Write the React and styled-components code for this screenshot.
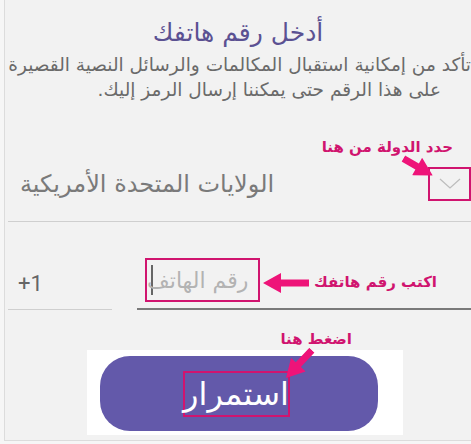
import React from 'react';
import styled, { createGlobalStyle } from 'styled-components';

const pink = '#d0146f';
const arrowPink = '#ee1479';
const arabic = `"DejaVu Sans", "Noto Sans", sans-serif`;

const GlobalStyle = createGlobalStyle`
    body {
        margin: 0;
        background: #f6f6f6;
        font-family: ${arabic};
    }
`;

const Screen = styled.div`
    position: relative;
    box-sizing: border-box;
    width: 467px;
    height: 441px;
    margin-left: 4px;
    background: #f2f2f2;
    border-left: 1px solid #dcdcdc;
    border-bottom: 1px solid #dcdcdc;
    direction: rtl;
`;

const Title = styled.h1`
    margin: 0;
    padding-top: 17px;
    font-size: 25px;
    line-height: 32px;
    font-weight: 400;
    text-align: center;
    color: #5b5192;
`;

const Hint = styled.p`
    margin: 3px 0 0;
    font-size: 18.5px;
    line-height: 25px;
    color: #6a6a6a;
    text-align: right;
    white-space: nowrap;
`;

const HintLine = styled.span`
    display: block;
    padding-right: ${p => p.$indent || 0}px;
`;

const CountryRow = styled.div`
    display: flex;
    align-items: center;
    justify-content: space-between;
    height: 34px;
    margin: 65px 0 0 3px;
    padding: 0 0 20px 12px;
    border-bottom: 1px solid #cfcfcf;
`;

const ChevronBox = styled.div`
    box-sizing: border-box;
    width: 43px;
    height: 34px;
    border: 2px solid ${pink};
    display: flex;
    align-items: center;
    justify-content: center;
`;

const CountryName = styled.span`
    font-size: 24px;
    color: #7a7a7a;
`;

const PhoneRow = styled.div`
    display: flex;
    align-items: flex-end;
    gap: 25px;
    margin: 36px 0 0 3px;
`;

const PhoneField = styled.div`
    flex: 1;
    height: 50px;
    direction: ltr;
    display: flex;
    align-items: flex-start;
    padding-left: 8px;
    border-bottom: 2px solid #7a7a7a;
`;

const HintBox = styled.div`
    box-sizing: border-box;
    width: 115px;
    height: 44px;
    border: 2px solid ${pink};
    display: flex;
    align-items: center;
    overflow: hidden;
    padding-left: 4px;
`;

const Cursor = styled.span`
    flex: none;
    width: 2px;
    height: 30px;
    background: #666;
`;

const Placeholder = styled.span`
    direction: rtl;
    font-size: 22px;
    color: #b3b3b3;
    white-space: nowrap;
    margin-left: -6px;
`;

const CodeField = styled.div`
    width: 94px;
    height: 51px;
    direction: ltr;
    display: flex;
    align-items: center;
    padding-left: 10px;
    border-bottom: 1px solid #cfcfcf;
    font-family: "Roboto", "Liberation Sans", sans-serif;
    font-size: 22px;
    color: #666;
`;

const ButtonStage = styled.div`
    box-sizing: border-box;
    width: 316px;
    height: 85px;
    margin: 40px 68px 0 0;
    padding: 6px 25px 4px 13px;
    background: #fff;
`;

const ContinueButton = styled.button`
    width: 100%;
    height: 100%;
    border: none;
    border-radius: 30px;
    background: #6359aa;
    display: flex;
    align-items: center;
    justify-content: center;
    padding: 0 6px 0 0;
    cursor: pointer;
`;

const ButtonLabel = styled.span`
    box-sizing: border-box;
    width: 107px;
    height: 46px;
    border: 2px solid ${pink};
    display: flex;
    align-items: center;
    justify-content: center;
    font-family: ${arabic};
    font-size: 32px;
    color: #fff;
`;

/* annotation label, anchored by its right edge (x measured from the screen's left) */
const Note = styled.span`
    position: absolute;
    right: ${p => 466 - p.$right}px;
    top: ${p => p.$y}px;
    transform: translateY(-50%);
    font-size: 15px;
    font-weight: 700;
    color: ${pink};
    white-space: nowrap;
`;

const ArrowBox = styled.svg`
    position: absolute;
    left: ${p => p.$x - p.$len / 2}px;
    top: ${p => p.$y - 10}px;
    transform: rotate(${p => p.$angle}deg);
`;

const Arrow = ({ x, y, len, angle }) => (
    <ArrowBox $x={x} $y={y} $len={len} $angle={angle} width={len} height={20} viewBox={`0 0 ${len} 20`}>
        <path d={`M0 6.5 H${len - 18} V0 L${len} 10 L${len - 18} 20 V13.5 H0 Z`} fill={arrowPink} />
    </ArrowBox>
);

const Chevron = () => (
    <svg width="22" height="12" viewBox="0 0 22 12">
        <path d="M1 1 L11 10 L21 1" fill="none" stroke="#bdbdbd" strokeWidth="1.3" />
    </svg>
);

export default function App() {
    return <>
        <GlobalStyle />
        <Screen>
            <Title>أدخل رقم هاتفك</Title>
            <Hint>
                <HintLine>تأكد من إمكانية استقبال المكالمات والرسائل النصية القصيرة</HintLine>
                <HintLine $indent={30}>على هذا الرقم حتى يمكننا إرسال الرمز إليك.</HintLine>
            </Hint>

            <CountryRow>
                <ChevronBox><Chevron /></ChevronBox>
                <CountryName>الولايات المتحدة الأمريكية</CountryName>
            </CountryRow>

            <PhoneRow>
                <PhoneField>
                    <HintBox>
                        <Cursor />
                        <Placeholder>رقم الهاتف</Placeholder>
                    </HintBox>
                </PhoneField>
                <CodeField>+1</CodeField>
            </PhoneRow>

            <ButtonStage>
                <ContinueButton>
                    <ButtonLabel>استمرار</ButtonLabel>
                </ContinueButton>
            </ButtonStage>

            <Note $right={448} $y={147}>حدد الدولة من هنا</Note>
            <Arrow x={413} y={167} len={34} angle={30} />

            <Note $right={432} $y={282}>اكتب رقم هاتفك</Note>
            <Arrow x={281} y={283} len={46} angle={180} />

            <Note $right={347} $y={339}>اضغط هنا</Note>
            <Arrow x={294} y={364} len={38} angle={133} />
        </Screen>
    </>;
}
